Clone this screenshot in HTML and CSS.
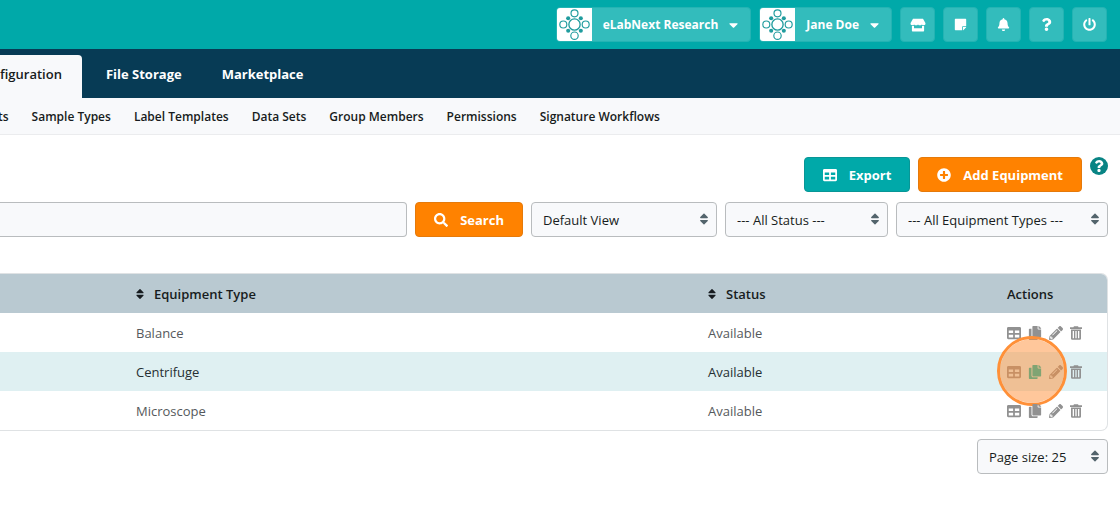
FILE: index.html
```html
<!DOCTYPE html>
<html lang="en">
<head>
<meta charset="utf-8">
<meta name="viewport" content="width=device-width, initial-scale=1">
<title>Equipment</title>
<link rel="stylesheet" href="styles.css">
</head>
<body>
<svg class="sprite" aria-hidden="true">
  <symbol id="logo" viewBox="0 0 36 36">
    <g fill="none" stroke="currentColor" stroke-width="1.2">
      <circle cx="18" cy="18" r="5.8" stroke-width="1.4"/>
      <circle cx="18" cy="6.5" r="3.6"/><circle cx="18" cy="29.5" r="3.8"/>
      <circle cx="6.500" cy="18" r="3.6"/><circle cx="29.500" cy="18" r="3.6"/>
    </g>
    <circle cx="11.5" cy="11.5" r="2.100"/><circle cx="24.500" cy="11.500" r="2.100"/>
    <circle cx="11.500" cy="24.500" r="2.100"/><circle cx="24.500" cy="24.500" r="2.100"/>
  </symbol>
  <symbol id="caret" viewBox="0 0 320 512"><path d="M31.3 192h257.3c17.8 0 26.7 21.5 14.1 34.1L174.1 354.8c-7.8 7.8-20.5 7.8-28.3 0L17.2 226.1C4.6 213.5 13.5 192 31.3 192z"/></symbol>
  <symbol id="sort" viewBox="0 0 320 512"><path d="M41 288h238c21.4 0 32.1 25.9 17 41L177 448c-9.4 9.4-24.6 9.4-33.9 0L24 329c-15.1-15.1-4.4-41 17-41zm255-105L177 64c-9.4-9.4-24.6-9.4-33.9 0L24 183c-15.1 15.1-4.4 41 17 41h238c21.4 0 32.1-25.9 17-41z"/></symbol>
  <symbol id="store" viewBox="0 0 16 16"><path d="M3 1.7h10L15.4 6c.3 1.3-.5 2.3-1.6 2.3-.8 0-1.5-.3-1.9-.9-.5.6-1.100.9-1.900.9S8.500 8 8 7.400C7.500 8 6.800 8.300 6 8.300s-1.400-.3-1.900-.9c-.4.6-1.100.9-1.900.9C1.100 8.300.3 7.300.6 6z"/><path d="M1.900 9c.8.100 1.500 0 2.100-.300V11.200h8V8.700c.6.3 1.300.4 2.100.3v4.500c0 .6-.4 1-1 1H2.900c-.6 0-1-.4-1-1z"/></symbol>
  <symbol id="note" viewBox="0 0 448 512"><path d="M312 320h136V56c0-13.300-10.700-24-24-24H24C10.700 32 0 42.700 0 56v400c0 13.300 10.700 24 24 24h264V344c0-13.200 10.800-24 24-24zm129 55l-98 98c-4.500 4.500-10.600 7-17 7h-6V352h128v6.100c0 6.300-2.500 12.400-7 16.900z"/></symbol>
  <symbol id="bell" viewBox="0 0 448 512"><path d="M224 512c35.320 0 63.970-28.650 63.970-64H160.030c0 35.350 28.650 64 63.970 64zm215.390-149.710c-19.320-20.760-55.470-51.990-55.470-154.290 0-77.700-54.480-139.900-127.940-155.160V32c0-17.670-14.320-32-31.980-32s-31.980 14.330-31.980 32v20.840C118.560 68.100 64.080 130.300 64.080 208c0 102.300-36.150 133.530-55.470 154.290-6 6.450-8.660 14.160-8.610 21.710.11 16.400 12.980 32 32.100 32h383.800c19.120 0 32-15.600 32.100-32 .05-7.550-2.610-15.270-8.610-21.710z"/></symbol>
  <symbol id="question" viewBox="0 0 384 512"><path d="M202.021 0C122.202 0 70.503 32.703 29.914 91.026c-7.363 10.580-5.093 25.086 5.178 32.874l43.138 32.709c10.373 7.865 25.132 6.026 33.253-4.148 25.049-31.381 43.630-49.449 82.757-49.449 30.764 0 68.816 19.799 68.816 49.631 0 22.552-18.617 34.134-48.993 51.164-35.423 19.860-82.299 44.576-82.299 106.405V320c0 13.255 10.745 24 24 24h72.471c13.255 0 24-10.745 24-24v-5.773c0-42.860 125.268-44.645 125.268-160.627C377.504 66.256 286.902 0 202.021 0zM192 373.459c-38.196 0-69.271 31.075-69.271 69.271 0 38.195 31.075 69.270 69.271 69.270s69.271-31.075 69.271-69.271-31.075-69.270-69.271-69.270z"/></symbol>
  <symbol id="power" viewBox="0 0 512 512"><path d="M400 54.100c63 45 104 118.600 104 201.900 0 136.800-110.800 247.700-247.500 248C120 504.300 8.200 393 8 256.400 7.900 173.100 48.900 99.300 111.800 54.200c11.700-8.300 28-4.800 35 7.700L162.600 90c5.900 10.500 3.100 23.800-6.600 31-41.500 30.800-68 79.600-68 134.900-.1 92.300 74.500 168.100 168 168.100 91.600 0 168.600-74.200 168-169.100-.3-51.800-24.700-101.800-68.100-134-9.700-7.200-12.400-20.500-6.500-30.900l15.800-28.100c7-12.400 23.200-16.100 34.800-7.800zM296 264V24c0-13.300-10.700-24-24-24h-32c-13.300 0-24 10.700-24 24v240c0 13.300 10.700 24 24 24h32c13.300 0 24-10.700 24-24z"/></symbol>
  <symbol id="table" viewBox="0 0 512 512"><path d="M464 32H48C21.490 32 0 53.490 0 80v352c0 26.510 21.490 48 48 48h416c26.510 0 48-21.490 48-48V80c0-26.510-21.490-48-48-48zM224 416H64v-96h160v96zm0-160H64v-96h160v96zm224 160H288v-96h160v96zm0-160H288v-96h160v96z"/></symbol>
  <symbol id="plus" viewBox="0 0 512 512"><path d="M256 8C119 8 8 119 8 256s111 248 248 248 248-111 248-248S393 8 256 8zm144 276c0 6.600-5.400 12-12 12h-92v92c0 6.600-5.400 12-12 12h-56c-6.600 0-12-5.400-12-12v-92h-92c-6.600 0-12-5.400-12-12v-56c0-6.600 5.400-12 12-12h92v-92c0-6.600 5.400-12 12-12h56c6.600 0 12 5.400 12 12v92h92c6.600 0 12 5.400 12 12v56z"/></symbol>
  <symbol id="search" viewBox="0 0 512 512"><path d="M505 442.700L405.300 343c-4.500-4.500-10.600-7-17-7H372c27.600-35.300 44-79.700 44-128C416 93.100 322.900 0 208 0S0 93.100 0 208s93.100 208 208 208c48.300 0 92.700-16.400 128-44v16.300c0 6.400 2.500 12.500 7 17l99.700 99.700c9.400 9.400 24.600 9.400 33.900 0l28.300-28.300c9.400-9.400 9.400-24.600.1-34zM208 336c-70.700 0-128-57.200-128-128 0-70.700 57.200-128 128-128 70.700 0 128 57.200 128 128 0 70.700-57.200 128-128 128z"/></symbol>
  <symbol id="copy" viewBox="0 0 448 512"><path d="M320 448v40c0 13.255-10.745 24-24 24H24c-13.255 0-24-10.745-24-24V120c0-13.255 10.745-24 24-24h72v296c0 30.879 25.121 56 56 56h168zm0-344V0H152c-13.255 0-24 10.745-24 24v368c0 13.255 10.745 24 24 24h272c13.255 0 24-10.745 24-24V128H344c-13.200 0-24-10.800-24-24zm120.971-31.029L375.029 7.029A24 24 0 0 0 358.059 0H352v96h96v-6.059a24 24 0 0 0-7.029-16.970z"/></symbol>
  <symbol id="pencil" viewBox="0 0 512 512"><path d="M497.900 142.100l-46.100 46.100c-4.700 4.700-12.300 4.700-17 0l-111-111c-4.700-4.700-4.700-12.300 0-17l46.100-46.100c18.700-18.700 49.100-18.700 67.900 0l60.100 60.100c18.800 18.700 18.800 49.100 0 67.900zM284.200 99.800L21.600 362.400.4 483.900c-2.900 16.400 11.400 30.600 27.800 27.800l121.500-21.300 262.600-262.600c4.700-4.700 4.700-12.300 0-17l-111-111c-4.800-4.700-12.400-4.700-17.100 0zM124.100 339.900c-5.500-5.500-5.500-14.300 0-19.800l154-154c5.500-5.500 14.300-5.500 19.800 0s5.500 14.300 0 19.800l-154 154c-5.500 5.500-14.300 5.500-19.800 0zM88 424h48v36.300l-64.500 11.300-31.100-31.100L51.700 376H88v48z"/></symbol>
  <symbol id="trash" viewBox="0 0 12 14"><path fill-rule="evenodd" d="M4 .3h4l.6 1H12v1.600H0V1.300h3.400zM1 3.600h10v8.900q0 1.200-1.200 1.200H2.200Q1 13.700 1 12.500zM2.700 5v7.200h1.300V5zM5.350 5v7.200h1.300V5zM8 5v7.200h1.300V5z"/></symbol>
</svg>

<header class="topbar">
  <button class="account" type="button"><span class="avatar"><svg><use href="#logo"/></svg></span><span class="account-name">eLabNext Research</span><svg class="icon caret"><use href="#caret"/></svg></button>
  <button class="account" type="button"><span class="avatar"><svg><use href="#logo"/></svg></span><span class="account-name">Jane Doe</span><svg class="icon caret"><use href="#caret"/></svg></button>
  <button class="tool" type="button" aria-label="Store"><svg class="icon store"><use href="#store"/></svg></button>
  <button class="tool" type="button" aria-label="Notes"><svg class="icon"><use href="#note"/></svg></button>
  <button class="tool" type="button" aria-label="Notifications"><svg class="icon"><use href="#bell"/></svg></button>
  <button class="tool" type="button" aria-label="Help"><svg class="icon"><use href="#question"/></svg></button>
  <button class="tool" type="button" aria-label="Log out"><svg class="icon"><use href="#power"/></svg></button>
</header>

<nav class="tabs">
  <a class="tab active" href="#">figuration</a>
  <a class="tab" href="#">File Storage</a>
  <a class="tab" href="#">Marketplace</a>
</nav>

<nav class="subnav">
  <a href="#">ts</a>
  <a href="#">Sample Types</a>
  <a href="#">Label Templates</a>
  <a href="#">Data Sets</a>
  <a href="#">Group Members</a>
  <a href="#">Permissions</a>
  <a href="#">Signature Workflows</a>
</nav>

<main class="content">
  <div class="actions">
    <button class="btn teal" type="button"><svg class="icon"><use href="#table"/></svg>Export</button>
    <button class="btn orange" type="button"><svg class="icon"><use href="#plus"/></svg>Add Equipment</button>
    <button class="help" type="button" aria-label="Help"><svg class="icon"><use href="#question"/></svg></button>
  </div>

  <form class="filters">
    <input class="query" type="text" aria-label="Search equipment">
    <button class="btn orange" type="button"><svg class="icon"><use href="#search"/></svg>Search</button>
    <div class="select view"><select aria-label="View"><option>Default View</option></select><svg class="icon"><use href="#sort"/></svg></div>
    <div class="select status"><select aria-label="Status"><option>--- All Status ---</option></select><svg class="icon"><use href="#sort"/></svg></div>
    <div class="select types"><select aria-label="Equipment type"><option>--- All Equipment Types ---</option></select><svg class="icon"><use href="#sort"/></svg></div>
  </form>

  <div class="panel">
    <table class="grid">
      <colgroup><col class="col-lead"><col class="col-type"><col class="col-status"><col class="col-actions"></colgroup>
      <thead>
        <tr><th></th><th><svg class="icon sorter"><use href="#sort"/></svg>Equipment Type</th><th><svg class="icon sorter"><use href="#sort"/></svg>Status</th><th>Actions</th></tr>
      </thead>
      <tbody>
        <tr>
          <td></td><td>Balance</td><td>Available</td>
          <td><div class="row-actions">
            <button type="button" aria-label="Details"><svg class="icon"><use href="#table"/></svg></button>
            <button type="button" aria-label="Copy"><svg class="icon"><use href="#copy"/></svg></button>
            <button type="button" aria-label="Edit"><svg class="icon"><use href="#pencil"/></svg></button>
            <button type="button" aria-label="Delete"><svg class="icon trash"><use href="#trash"/></svg></button>
          </div></td>
        </tr>
        <tr class="hovered">
          <td></td><td>Centrifuge</td><td>Available</td>
          <td><div class="row-actions">
            <button type="button" aria-label="Details"><svg class="icon"><use href="#table"/></svg></button>
            <button class="current" type="button" aria-label="Copy"><svg class="icon"><use href="#copy"/></svg></button>
            <button type="button" aria-label="Edit"><svg class="icon"><use href="#pencil"/></svg></button>
            <button type="button" aria-label="Delete"><svg class="icon trash"><use href="#trash"/></svg></button>
            <span class="click-marker"></span>
          </div></td>
        </tr>
        <tr>
          <td></td><td>Microscope</td><td>Available</td>
          <td><div class="row-actions">
            <button type="button" aria-label="Details"><svg class="icon"><use href="#table"/></svg></button>
            <button type="button" aria-label="Copy"><svg class="icon"><use href="#copy"/></svg></button>
            <button type="button" aria-label="Edit"><svg class="icon"><use href="#pencil"/></svg></button>
            <button type="button" aria-label="Delete"><svg class="icon trash"><use href="#trash"/></svg></button>
          </div></td>
        </tr>
      </tbody>
    </table>
  </div>

  <div class="pager">
    <div class="select size"><select aria-label="Page size"><option>Page size: 25</option></select><svg class="icon"><use href="#sort"/></svg></div>
  </div>
</main>
</body>
</html>
```
FILE: styles.css
```css
* { box-sizing: border-box; }

body {
  margin: 0;
  background: #fff;
  color: #171c20;
  font: 13px/20px "Open Sans", "Noto Sans", sans-serif;
}

button, input, select { font: inherit; }
button { border: 0; padding: 0; cursor: pointer; }
a { color: inherit; text-decoration: none; }

.sprite { position: absolute; width: 0; height: 0; }
.icon { display: block; width: 14px; height: 14px; fill: currentColor; flex: none; }

/* Top bar */
.topbar {
  display: flex;
  justify-content: flex-end;
  gap: 8px;
  padding: 7px 13px;
  background: #00a9a9;
}
.account, .tool {
  display: flex;
  align-items: center;
  height: 35px;
  border: 1px solid #24b3b3;
  border-radius: 4px;
  background: #33bcbc;
  color: #fff;
  font-weight: 700;
  font-size: 12px;
}
.account { overflow: hidden; padding-right: 12px; }
.avatar { width: 35px; height: 35px; background: #fff; color: #209c9e; }
.avatar svg { display: block; width: 35px; height: 35px; fill: currentColor; }
.account-name { padding: 0 11px; }
.account .caret { width: 9px; }
.tool { justify-content: center; width: 35px; }
.tool .icon { width: 13px; height: 13px; }
.tool .store { width: 16px; height: 16px; }

/* Main tabs */
.tabs {
  display: flex;
  align-items: flex-end;
  height: 49px;
  background: #073b55;
  color: #fff;
  font-weight: 700;
}
.tab { padding: 9px 16px 14px 24px; }
.tab.active {
  padding-left: 0;
  padding-right: 20px;
  border-radius: 0 4px 0 0;
  background: #f8f9fb;
  color: #171c20;
  font-weight: 600;
}

/* Secondary navigation */
.subnav {
  display: flex;
  gap: 23px;
  padding: 9px 0 7px;
  border-bottom: 1px solid #ebecee;
  background: #f8f9fb;
  font-size: 12px;
  font-weight: 600;
}
.subnav a:first-child { margin-left: -2px; }

/* Page content */
.content { padding: 22px 12px 0 0; }

.actions { display: flex; justify-content: flex-end; gap: 8px; }

.btn {
  display: flex;
  align-items: center;
  justify-content: center;
  gap: 12px;
  height: 35px;
  padding: 0 18px;
  border: 1px solid;
  border-radius: 4px;
  color: #fff;
  font-weight: 700;
}
.btn.teal { background: #00a9a9; border-color: #089696; }
.btn.orange { background: #ff8200; border-color: #e57a0b; }

.help {
  display: grid;
  place-items: center;
  width: 18px;
  height: 18px;
  border-radius: 50%;
  background: #098484;
  color: #fff;
}
.help .icon { width: 12px; height: 12px; }

.filters { display: flex; gap: 8px; margin-top: 10px; }
.query {
  flex: 1;
  min-width: 0;
  height: 35px;
  border: 1px solid #b9bcbe;
  border-left: 0;
  border-radius: 0 4px 4px 0;
  background: #f8f9fb;
}

.select { display: grid; align-items: center; }
.select select, .select .icon { grid-area: 1 / 1; }
.select select {
  appearance: none;
  width: 100%;
  height: 35px;
  padding: 0 24px 0 11px;
  border: 1px solid #b9bcbe;
  border-radius: 4px;
  background: #f8f9fb;
  color: #171c20;
}
.select .icon {
  justify-self: end;
  margin: 0 6px 2px 0;
  color: #53646c;
  pointer-events: none;
}
.view { width: 186px; }
.status { width: 163px; }
.types { width: 212px; }
.size { width: 131px; }

/* Equipment table */
.panel {
  margin-top: 36px;
  border: 1px solid #dfe2e4;
  border-left: 0;
  border-radius: 0 7px 7px 0;
}
.grid { width: 100%; table-layout: fixed; border-collapse: separate; border-spacing: 0; }
.col-lead { width: 136px; }
.col-status { width: 299px; }
.col-actions { width: 100px; }
.grid th, .grid td { height: 39px; padding: 0; text-align: left; }
.grid th { background: #b9c9d1; font-weight: 600; }
.grid th:last-child { border-radius: 0 6px 0 0; }
.grid td { color: #55595c; }
.hovered td { background: #dff0f2; color: #262f33; }
.sorter { display: inline-block; width: 8px; margin-right: 10px; vertical-align: -2px; }

.row-actions { position: relative; display: flex; gap: 7px; }
.row-actions button { background: none; color: #919191; }
.row-actions .trash { width: 12px; }
.row-actions .current { color: #00b9af; }
.click-marker {
  position: absolute;
  top: -29px;
  left: -10px;
  width: 70px;
  height: 70px;
  border: 3px solid #ff9038;
  border-radius: 50%;
  background: rgba(255, 144, 56, 0.5);
  background-clip: padding-box;
  pointer-events: none;
}

.pager { display: flex; justify-content: flex-end; margin-top: 8px; }
```
